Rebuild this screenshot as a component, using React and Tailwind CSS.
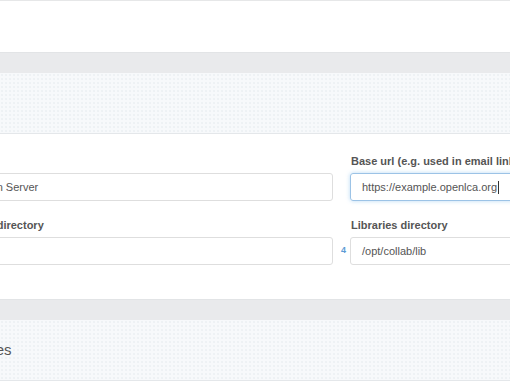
export default function App() {
    const dots =
        "bg-[#f7f9fb] bg-[radial-gradient(circle,#eef1f4_0.7px,transparent_0.8px)] bg-size-[4px_4px]";

    return (
        <div className="w-[510px] h-[382px] overflow-hidden bg-white font-['Liberation_Sans',Arial,sans-serif] text-[#555]">
            <div className="h-[52px] border-t border-[#e6e7e8] bg-white" />
            <div className="h-[21px] border-t border-[#e2e4e6] bg-[#e9eaec]" />
            <div className={`h-[61px] border-b border-[#e4e7ea] ${dots}`} />

            <div className="relative h-[165px] pt-[21px]">
                <div className="ml-[-74px] grid grid-cols-[407px_407px] gap-x-[17px] gap-y-[18px]">
                    <Field label="Server name" value="Collaboration Server" />
                    <Field label="Base url (e.g. used in email links)" value="https://example.openlca.org" focused />
                    <Field label="Repositories directory" value="" />
                    <Field label="Libraries directory" value="/opt/collab/lib" />
                </div>
                <span className="absolute left-[341px] top-[112px] text-[9px] leading-none font-bold text-[#5b9bd5]">
                    4
                </span>
            </div>

            <div className="h-[21px] border-t border-[#e2e4e6] bg-[#e9eaec]" />
            <div className={`h-[61px] border-b border-[#e4e7ea] flex items-center ${dots}`}>
                <span className="ml-[-46px] text-[15px] text-[#555]">Libraries</span>
            </div>
        </div>
    );
}

function Field({ label, value, focused }) {
    return (
        <div className="flex flex-col">
            <label className="pl-px text-[11px] leading-[13px] font-bold text-[#555] whitespace-nowrap">
                {label}
            </label>
            <div
                className={`mt-[5px] h-[28px] rounded-[3px] border flex items-center pl-[11px] text-[11px] text-[#555] whitespace-nowrap ${
                    focused
                        ? "border-[#9cc3e6] shadow-[0_0_4px_rgba(102,175,233,0.45)]"
                        : "border-[#dedede]"
                }`}
            >
                {value}
                {focused && <span className="ml-px w-px h-[13px] bg-[#333]" />}
            </div>
        </div>
    );
}
